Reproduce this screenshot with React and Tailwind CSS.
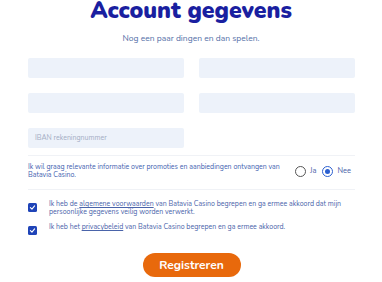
import { useState } from "react";

function Field({ placeholder = "" }) {
  return (
    <div className="h-[20px] rounded-[2px] bg-[#edf2fa] px-[7px] flex items-center text-[7px] text-[#a3adc4]">
      {placeholder}
    </div>
  );
}

function Radio({ label, checked }) {
  return (
    <label className="flex items-center gap-[4px]">
      <span
        className={
          "flex h-[11px] w-[11px] items-center justify-center rounded-full border " +
          (checked ? "border-[#2b5fd0]" : "border-[#555]")
        }
      >
        {checked ? <span className="h-[5px] w-[5px] rounded-full bg-[#2b5fd0]" /> : null}
      </span>
      <span className="text-[7.5px] text-[#4a5fa8]">{label}</span>
    </label>
  );
}

function Check({ children }) {
  return (
    <div className="flex items-start">
      <span className="mt-[3px] flex h-[9px] w-[9px] shrink-0 items-center justify-center rounded-[1.5px] bg-[#1f44b8]">
        <svg viewBox="0 0 10 10" className="h-[7px] w-[7px]">
          <path d="M2 5.2 L4.2 7.3 L8 2.8" fill="none" stroke="white" strokeWidth="1.6" strokeLinecap="round" strokeLinejoin="round" />
        </svg>
      </span>
      <p className="ml-[12px] text-[7px] leading-[8px] text-[#4a64aa]">{children}</p>
    </div>
  );
}

export default function App() {
  const [promo] = useState("nee");

  return (
    <div
      className="h-[282px] w-[382px] overflow-hidden bg-white"
      style={{ fontFamily: "'Nunito', 'Lato', 'Open Sans', sans-serif" }}
    >
      <h1 className="text-center text-[23px] font-black leading-[22px] text-[#1a1fa0]">
        Account gegevens
      </h1>
      <p className="mt-[11px] text-center text-[8.5px] leading-[10px] text-[#5570a8]">
        Nog een paar dingen en dan spelen.
      </p>

      <div className="ml-[28px] mr-[27px] mt-[15px]">
        <div className="grid grid-cols-2 gap-x-[15px] gap-y-[15px]">
          <Field />
          <Field />
          <Field />
          <Field />
          <Field placeholder="IBAN rekeningnummer" />
        </div>

        <div className="mt-[7px] border-t border-[#f0f2f6]" />

        <div className="flex items-center pt-[7px] pb-[10px]">
          <p className="w-[262px] text-[7px] leading-[8px] text-[#3f62b0]">
            Ik wil graag relevante informatie over promoties en aanbiedingen ontvangen van Batavia Casino.
          </p>
          <div className="ml-[5px] flex items-center gap-[6px]">
            <Radio label="Ja" checked={promo === "ja"} />
            <Radio label="Nee" checked={promo === "nee"} />
          </div>
        </div>

        <div className="border-t border-[#f0f2f6]" />

        <div className="mt-[10px] flex flex-col gap-[7px]">
          <Check>
            Ik heb de <span className="underline">algemene voorwaarden</span> van Batavia Casino begrepen en ga ermee akkoord dat mijn persoonlijke gegevens veilig worden verwerkt.
          </Check>
          <Check>
            Ik heb het <span className="underline">privacybeleid</span> van Batavia Casino begrepen en ga ermee akkoord.
          </Check>
        </div>

        <div className="mt-[18px] flex justify-center">
          <button className="h-[24px] w-[98px] rounded-full bg-[#e8690c] text-[12px] font-bold text-white">
            Registreren
          </button>
        </div>
      </div>
    </div>
  );
}
